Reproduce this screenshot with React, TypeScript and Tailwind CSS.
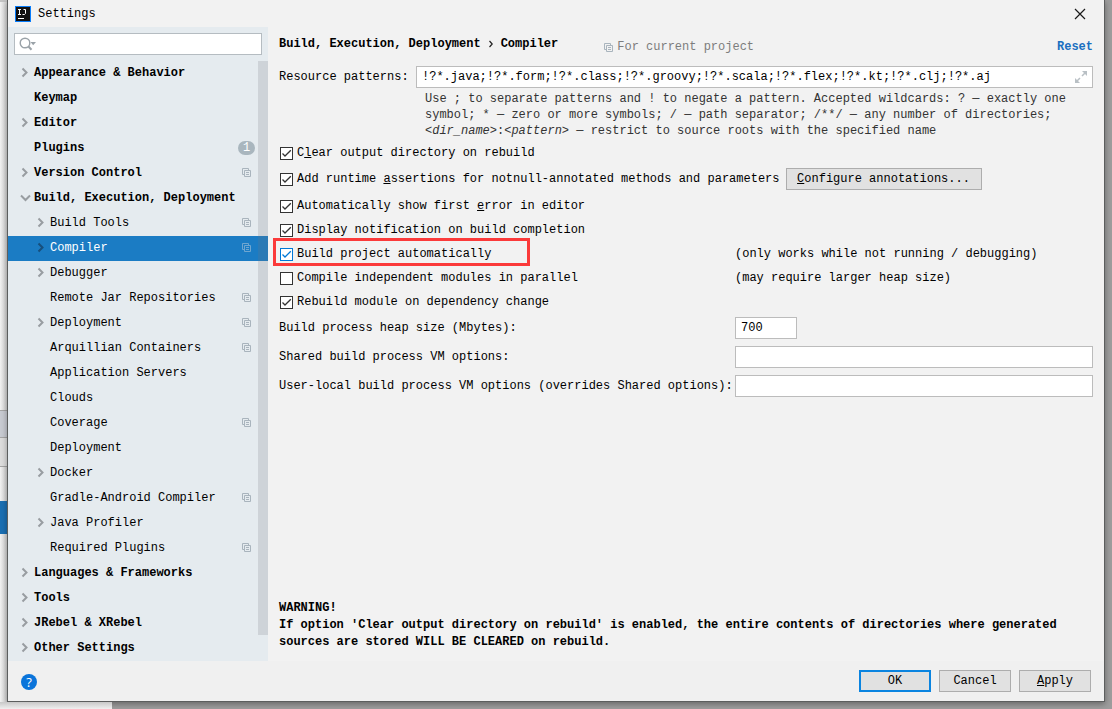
import { useState } from "react";
import type { ReactNode } from "react";

interface TreeItem {
  label: string;
  child?: boolean;
  arrow?: "closed" | "open";
  project?: boolean;
  badge?: number;
}

const items: TreeItem[] = [
  { label: "Appearance & Behavior", arrow: "closed" },
  { label: "Keymap" },
  { label: "Editor", arrow: "closed" },
  { label: "Plugins", badge: 1 },
  { label: "Version Control", arrow: "closed", project: true },
  { label: "Build, Execution, Deployment", arrow: "open" },
  { label: "Build Tools", child: true, arrow: "closed", project: true },
  { label: "Compiler", child: true, arrow: "closed", project: true },
  { label: "Debugger", child: true, arrow: "closed" },
  { label: "Remote Jar Repositories", child: true, project: true },
  { label: "Deployment", child: true, arrow: "closed", project: true },
  { label: "Arquillian Containers", child: true, project: true },
  { label: "Application Servers", child: true },
  { label: "Clouds", child: true },
  { label: "Coverage", child: true, project: true },
  { label: "Deployment", child: true },
  { label: "Docker", child: true, arrow: "closed" },
  { label: "Gradle-Android Compiler", child: true, project: true },
  { label: "Java Profiler", child: true, arrow: "closed" },
  { label: "Required Plugins", child: true, project: true },
  { label: "Languages & Frameworks", arrow: "closed" },
  { label: "Tools", arrow: "closed" },
  { label: "JRebel & XRebel", arrow: "closed" },
  { label: "Other Settings", arrow: "closed" },
];

const CopyIcon = ({ className = "text-[#a9b4bd]" }: { className?: string }) => (
  <svg className={className} width="9" height="9" viewBox="0 0 9 9" fill="none" stroke="currentColor">
    <path d="M2 6.5H0.5V0.5H6.5V2" />
    <path d="M2.5 2.5H8.5V8.5H2.5Z" />
    <path d="M4 4.5H7M4 6.5H7" />
  </svg>
);

const Arrow = ({ open, selected }: { open: boolean; selected: boolean }) => (
  <svg
    className={selected ? "text-[#174f7c]" : "text-[#989da1]"}
    width="14"
    height="14"
    viewBox="0 0 14 14"
    fill="none"
    stroke="currentColor"
    strokeWidth="2"
  >
    <path d={open ? "M3 4.5L7.5 9L12 4.5" : "M4.5 2.5L8.5 6.5L4.5 10.5"} />
  </svg>
);

interface TreeRowProps {
  item: TreeItem;
  selected: boolean;
  onSelect: () => void;
}

const TreeRow = ({ item, selected, onSelect }: TreeRowProps) => (
  <li>
    <button
      type="button"
      onClick={onSelect}
      className={`flex h-[25px] w-full items-center pb-0.5 pr-[13px] text-left ${
        item.child ? "pl-[26px]" : "pl-2.5 font-bold"
      } ${selected ? "bg-[#1b7cc4] text-white" : ""}`}
    >
      <span className="mr-0.5 w-3.5 shrink-0">
        {item.arrow && <Arrow open={item.arrow === "open"} selected={selected} />}
      </span>
      <span className="flex-1 whitespace-nowrap">{item.label}</span>
      <span className="flex w-[17px] shrink-0 justify-center">
        {item.project && <CopyIcon className={selected ? "text-[#6fa6d0]" : "text-[#a9b4bd]"} />}
        {item.badge && (
          <span className="h-3.5 w-[17px] rounded-full bg-[#a9b6be] text-center font-normal leading-[14px] text-white">
            {item.badge}
          </span>
        )}
      </span>
    </button>
  </li>
);

interface CheckProps {
  children: ReactNode;
  checked?: boolean;
  focused?: boolean;
}

const Check = ({ children, checked = true, focused = false }: CheckProps) => (
  <label className="flex items-center gap-1 whitespace-nowrap">
    <span className={`grid ${focused ? "text-[#0078d7]" : "text-[#333]"}`}>
      <input
        type="checkbox"
        defaultChecked={checked}
        className="peer col-start-1 row-start-1 size-[13px] appearance-none border border-current bg-white"
      />
      <svg
        className="pointer-events-none invisible col-start-1 row-start-1 peer-checked:visible"
        width="13"
        height="13"
        viewBox="0 0 13 13"
        fill="none"
        stroke="currentColor"
        strokeWidth="1.3"
      >
        <path d="M2.5 6.5L5 9L10.8 3.2" />
      </svg>
    </span>
    <span>{children}</span>
  </label>
);

const inputStyle = "h-[22px] min-w-0 border border-[#bcbcbc] bg-white px-[5px] outline-none";
const buttonStyle = "h-[22px] bg-[#e1e1e1] leading-5";
const optionRow = "grid h-6 grid-cols-[455px_1fr] items-center";
const fieldRow = "grid grid-cols-[456px_1fr] items-center";

const Sidebar = () => {
  const [selected, setSelected] = useState(7);

  return (
    <aside className="w-[260px] shrink-0 bg-[#e5ebef]">
      <div className="px-1.5 pb-1.5 pt-1.5">
        <div className="flex h-[22px] items-center border border-[#b5bcc1] bg-white pl-1">
          <svg width="18" height="14" viewBox="0 0 18 14" fill="none" stroke="#9aa2a8" strokeWidth="1.4">
            <circle cx="6" cy="6" r="4.8" />
            <path d="M9.5 9.5L12.5 12.7" strokeWidth="2" />
            <path d="M11.5 5H17L14.2 8.2Z" fill="#9aa2a8" stroke="none" />
          </svg>
          <input type="text" aria-label="Search settings" className="min-w-0 flex-1 outline-none" />
        </div>
      </div>
      <nav className="relative">
        <ul>
          {items.map((item, i) => (
            <TreeRow key={i} item={item} selected={i === selected} onSelect={() => setSelected(i)} />
          ))}
        </ul>
        <div className="pointer-events-none absolute bottom-[26px] right-0 top-0 w-2.5 bg-[#73737f]/20" />
      </nav>
    </aside>
  );
};

const CompilerPage = () => (
  <main className="flex min-w-0 flex-1 flex-col px-[11px] pb-2.5">
    <header className="flex h-[34px] items-center font-bold">
      <h1 className="flex items-center whitespace-nowrap">
        Build, Execution, Deployment
        <svg className="mx-2" width="4" height="8" viewBox="0 0 4 8" fill="none" stroke="#222" strokeWidth="1.2">
          <path d="M0.5 1L3.2 4L0.5 7" />
        </svg>
        Compiler
      </h1>
      <span className="ml-[46px] flex items-center gap-1 pt-1.5 font-normal text-[#7d7d7d]">
        <CopyIcon />
        For current project
      </span>
      <a href="#reset" className="ml-auto pt-1.5 text-[#1a6fc0]">
        Reset
      </a>
    </header>

    <div className="mt-[5px] flex items-center">
      <label htmlFor="patterns" className="w-[137px] shrink-0">
        Resource patterns:
      </label>
      <div className="flex h-[22px] min-w-0 flex-1 items-center border border-[#bcbcbc] bg-white pl-[5px] pr-1">
        <input
          id="patterns"
          type="text"
          className="min-w-0 flex-1 outline-none"
          defaultValue="!?*.java;!?*.form;!?*.class;!?*.groovy;!?*.scala;!?*.flex;!?*.kt;!?*.clj;!?*.aj"
        />
        <button type="button" aria-label="Expand">
          <svg width="14" height="14" viewBox="0 0 14 14" fill="#b9c0c5" stroke="#b9c0c5" strokeWidth="1.5">
            <path d="M8 1H13V6Z" stroke="none" />
            <path d="M1 8V13H6Z" stroke="none" />
            <path d="M8 6L11 3M6 8L3 11" />
          </svg>
        </button>
      </div>
    </div>
    <p className="ml-[146px] mt-[3px] text-[#333]">
      Use ; to separate patterns and ! to negate a pattern. Accepted wildcards: ? — exactly one
      <br />
      symbol; * — zero or more symbols; / — path separator; /**/ — any number of directories;
      <br />
      <i>&lt;dir_name&gt;</i>:<i>&lt;pattern&gt;</i> — restrict to source roots with the specified name
    </p>

    <div className="ml-px mt-0.5">
      <div className="flex h-6 items-center">
        <Check>
          C<u>l</u>ear output directory on rebuild
        </Check>
      </div>
      <div className="mb-1 mt-[3px] flex items-center">
        <Check>
          Add runtime <u>a</u>ssertions for notnull-annotated methods and parameters
        </Check>
        <button type="button" className={`${buttonStyle} ml-1.5 w-[196px] border border-[#adadad]`}>
          <u>C</u>onfigure annotations...
        </button>
      </div>
      <div className={optionRow}>
        <Check>
          Automatically show first <u>e</u>rror in editor
        </Check>
      </div>
      <div className={optionRow}>
        <Check>Display notification on build completion</Check>
      </div>
      <div className={`relative ${optionRow}`}>
        <Check focused>Build project automatically</Check>
        <span>(only works while not running / debugging)</span>
        <div className="pointer-events-none absolute -left-[7px] -top-1 h-7 w-[257px] border-[3px] border-[#fb3a3a]" />
      </div>
      <div className={optionRow}>
        <Check checked={false}>Compile independent modules in parallel</Check>
        <span>(may require larger heap size)</span>
      </div>
      <div className={optionRow}>
        <Check>Rebuild module on dependency change</Check>
      </div>
    </div>

    <div className="mb-6 mt-[3px] flex flex-col gap-[7px]">
      <div className={fieldRow}>
        <label htmlFor="heap">Build process heap size (Mbytes):</label>
        <input id="heap" type="text" defaultValue="700" className={`${inputStyle} w-[62px]`} />
      </div>
      <div className={fieldRow}>
        <label htmlFor="shared">Shared build process VM options:</label>
        <input id="shared" type="text" className={inputStyle} />
      </div>
      <div className={fieldRow}>
        <label htmlFor="local" className="whitespace-nowrap">
          User-local build process VM options (overrides Shared options):
        </label>
        <input id="local" type="text" className={inputStyle} />
      </div>
    </div>

    <p className="mt-auto font-bold leading-[17px]">
      WARNING!
      <br />
      If option 'Clear output directory on rebuild' is enabled, the entire contents of directories where generated
      sources are stored WILL BE CLEARED on rebuild.
    </p>
  </main>
);

const Footer = () => (
  <footer className="flex items-start gap-2 bg-[#f0f0f0] px-[13px] py-[9px]">
    <button
      type="button"
      aria-label="Help"
      className="mr-auto mt-1 size-4 rounded-full bg-[#0a74da] font-['Open_Sans',sans-serif] text-[13px] leading-4 text-white"
    >
      ?
    </button>
    <button type="button" className="h-[22px] w-[72px] border-2 border-[#0a84e0] bg-[#e1e1e1] leading-[18px]">
      OK
    </button>
    <button type="button" className={`${buttonStyle} w-[72px] border border-[#adadad]`}>
      Cancel
    </button>
    <button type="button" className={`${buttonStyle} w-[72px] border border-[#adadad]`}>
      <u>A</u>pply
    </button>
  </footer>
);

const App = () => (
  <div className="flex min-h-screen flex-col bg-[#9d9d9d] font-['Liberation_Mono',monospace] text-[12px] leading-4 text-black">
    <div className="flex flex-1">
      {/* edge of the editor window behind the dialog */}
      <div className="flex w-[7px] shrink-0 flex-col bg-linear-to-r from-[#f2f2f2] to-[#cfcfcf]">
        <div className="h-0.5 bg-[#c4c4c4]" />
        <div className="mt-[408px] h-7 border-y border-[#a5a5a5] bg-[#c8cbd2]" />
        <div className="h-[29px] border-b border-[#a5a5a5] bg-[#dddddd]" />
        <div className="mt-[34px] h-[33px] bg-[#1a6fb3]" />
      </div>
      <div className="flex min-w-0 flex-1 flex-col border-x border-b border-[#5c5e5e] bg-[#f2f2f2] shadow-[0_2px_6px_rgba(0,0,0,0.35)]">
        <div className="flex h-[27px] items-center pl-[7px] pr-[18px]">
          <svg width="16" height="16" viewBox="0 0 16 16">
            <rect width="16" height="16" fill="#087cfa" />
            <rect x="1" y="1" width="14" height="14" fill="#111" />
            <path
              d="M3 3.5H6M4.5 3.5V8.5M3 8.5H6M8.5 3.5H10.5V7.5L9.5 8.5H7.5M3 12.5H9"
              fill="none"
              stroke="#fff"
            />
          </svg>
          <span className="ml-[7px]">Settings</span>
          <button type="button" aria-label="Close" className="ml-auto">
            <svg width="12" height="12" viewBox="0 0 12 12" stroke="#1a1a1a" strokeWidth="1.2">
              <path d="M1 1L11 11M11 1L1 11" />
            </svg>
          </button>
        </div>
        <div className="flex flex-1">
          <Sidebar />
          <CompilerPage />
        </div>
        <Footer />
      </div>
      <div className="w-[7px] shrink-0" />
    </div>
    <div className="h-[7px]">
      <div className="h-full w-28 bg-linear-to-b from-[#c8c8c8] to-[#f0f0f0]" />
    </div>
  </div>
);

export default App;
